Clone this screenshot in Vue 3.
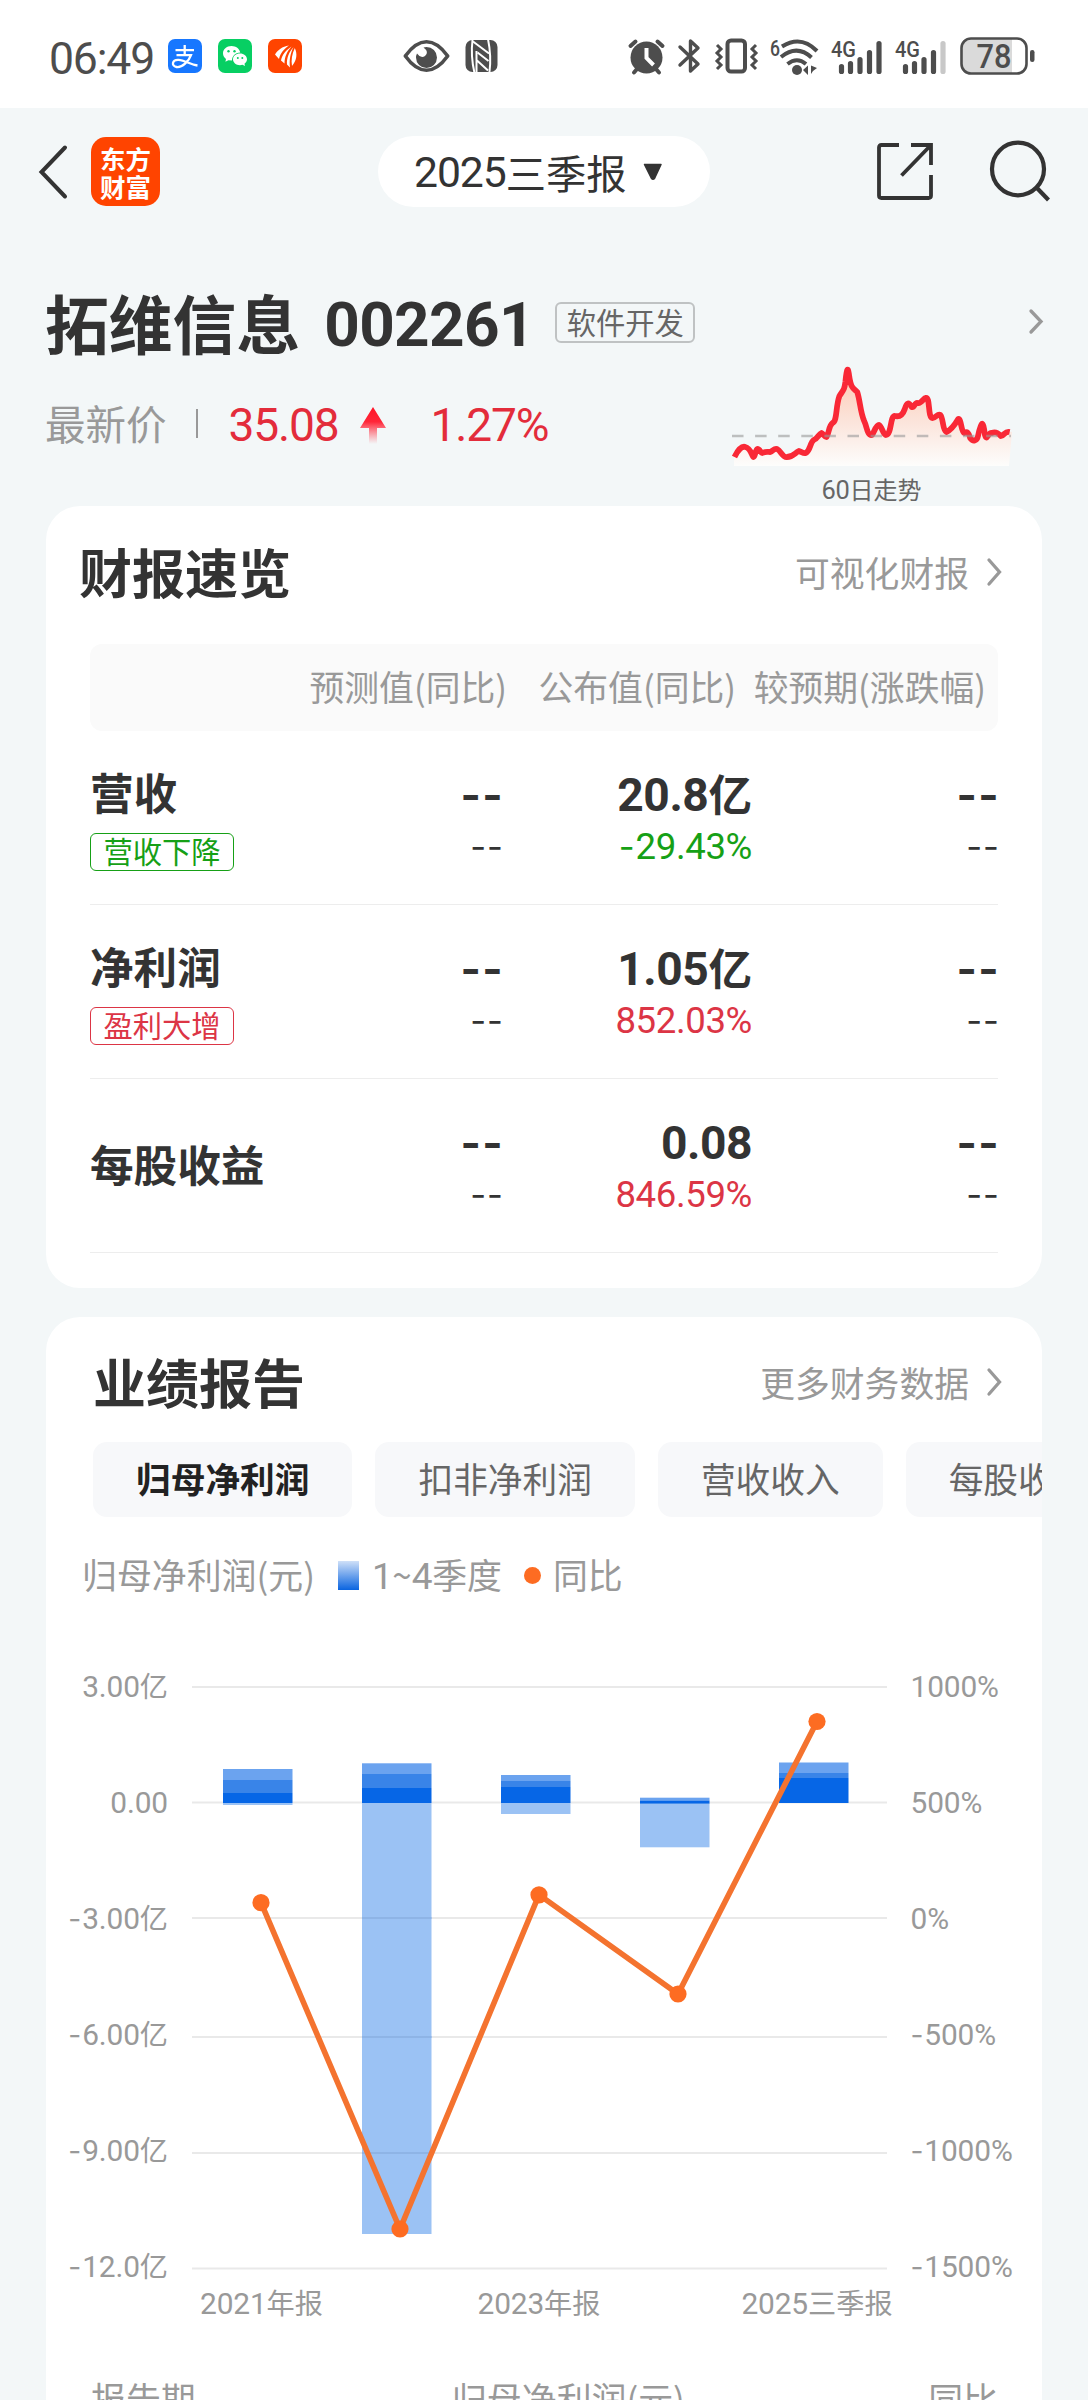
<script setup>
import { h } from 'vue'

// Splits a string so figures and dashes get their own typeface next to the Chinese text.
const Txt = (props) =>
  (props.s.match(/[0-9.%:]+|-+|[^0-9.%:-]+/g) || []).map((part) => {
    if (/^[0-9.%:]/.test(part)) return h(props.tag, { class: 'fig' }, part)
    if (part[0] === '-') return h(props.tag, { class: 'dash' }, part)
    return part
  })
Txt.props = { s: String, tag: { type: String, default: 'span' } }

const rows = [
  { name: '营收', tag: '营收下降', tone: 'down', value: '20.8亿', rate: '-29.43%' },
  { name: '净利润', tag: '盈利大增', tone: 'up', value: '1.05亿', rate: '852.03%' },
  { name: '每股收益', tag: '', tone: 'up', value: '0.08', rate: '846.59%' },
]
const tabs = ['归母净利润', '扣非净利润', '营收收入', '每股收益']

const grid = [
  { y: 47, ly: 57, left: '3.00亿', right: '1000%' },
  { y: 162.5, ly: 173, left: '0.00', right: '500%' },
  { y: 278, ly: 289, left: '-3.00亿', right: '0%' },
  { y: 397, ly: 405, left: '-6.00亿', right: '-500%' },
  { y: 513, ly: 521, left: '-9.00亿', right: '-1000%' },
  { y: 628.5, ly: 637, left: '-12.0亿', right: '-1500%' },
]
const C = ['#6ba3ef', '#3984e8', '#0666e6', '#9bc2f4']
const bars = [
  { x: 177, seg: [[129, 140, 0], [140, 153, 1], [153, 163, 2], [163, 165, 3]] },
  { x: 316, seg: [[123.3, 134, 0], [134, 148, 1], [148, 163, 2], [163, 594, 3]] },
  { x: 455, seg: [[135, 141, 0], [141, 147, 1], [147, 163, 2], [163, 174, 3]] },
  { x: 594, seg: [[157.7, 160.5, 0], [160.5, 163.8, 2], [163.8, 207.3, 3]] },
  { x: 733, seg: [[122.5, 133, 0], [133, 138, 1], [138, 163, 2]] },
]
const points = [[215, 262.7], [354, 589], [493, 254.8], [632, 354], [771, 81.5]]
const path = points.map((p) => p.join(',')).join(' ')
const periods = [
  { x: 215.5, t: '2021年报' },
  { x: 493, t: '2023年报' },
  { x: 771, t: '2025三季报' },
]
const trend =
  'M2 93 C6 85 10 82 13 83 C18 84 19 90 21 93 C23 93 23 86 25 85 C28 85 28 89 30 89 C34 87 36 88 38 88 C41 87 42 84 45 85 C49 87 51 94 55 93 C61 93 63 89 67 87 C70 88 72 90 74 89 C79 86 78 79 82 76 C86 75 87 70 90 69 C92 70 93 73 95 73 C98 68 97 62 101 59 C106 57 104 43 108 32 C112 26 113 26 114 18 Q116 -4 118 13 C120 25 122 24 126 28 C129 37 129 48 133 57 C136 63 136 72 141 71 C143 68 145 61 148 61 C151 62 152 71 155 71 C161 70 159 52 164 52 C169 53 172 51 174 45 C176 38 178 38 181 43 C184 44 184 38 187 39 C191 40 193 34 195 34 C200 32 197 54 202 54 C206 54 207 49 210 51 C213 54 212 66 216 68 C221 66 225 60 228 55 C231 54 231 68 234 69 C237 67 239 69 240 74 C243 78 247 77 248 72 C251 58 253 54 255 71 C257 78 258 68 262 69 C267 67 269 70 271 72 C275 71 275 67 280 68'
</script>

<template>
  <div class="page">
    <header class="status">
      <span class="clock"><Txt s="06:49" /></span>
      <svg class="app" width="34" height="34" viewBox="0 0 34 34">
        <rect width="34" height="34" rx="7" fill="#1777ff" />
        <path d="M7.500 11.200H26M16.700 6V16M8.500 16.200H23C21 22 14 29 8.500 28C3 27 4 20.500 10.500 20.800C17 21.200 22 25.500 29.500 26.500" fill="none" stroke="#fff" stroke-width="2.300" />
      </svg>
      <svg class="app" width="34" height="34" viewBox="0 0 34 34">
        <rect width="34" height="34" rx="7" fill="#07cf63" />
        <path d="M13.500 7C8.500 7 5 10.300 5 14.300C5 16.700 6.200 18.700 8 20L7.400 22.700L10.400 21.200L14 21.600C14 17 17 14 22.300 13.500C21.500 9.800 18 7 13.500 7Z" fill="#fff" />
        <path d="M22 14.500C17.800 14.500 15 17.200 15 20.300C15 23.600 18 26.200 22 26.200L24.500 25.800L27 27L26.500 24.800C28 23.700 29 22.200 29 20.300C29 17.200 26 14.500 22 14.500Z" fill="#fff" />
        <g fill="#07cf63"><circle cx="10.500" cy="12.300" r="1.200" /><circle cx="16.500" cy="12.300" r="1.200" /><circle cx="19.800" cy="19" r="1" /><circle cx="24.300" cy="19" r="1" /></g>
      </svg>
      <svg class="app" width="34" height="34" viewBox="0 0 34 34">
        <rect width="34" height="34" rx="7" fill="#ff4400" />
        <path d="M21 6.500C14 7.500 10 11 7 15.500L11 20C12.500 14 16 10 21 6.500ZM23.500 7.500C18 11 14 16 13 21.500L16.500 24.500C16.500 18 19 12.500 23.500 7.500ZM25.500 8C21 13 18.500 19 19 25.500L22 28.500C21 21 22.500 14 25.500 8ZM26.800 9C24 15 23 21 24 27C29 21 29.500 15 26.800 9Z" fill="#fff" />
      </svg>
      <svg class="eye" width="47" height="34" viewBox="0 0 47 34">
        <path d="M2.300 17C16 -2 31 -2 44.700 17C31 36 16 36 2.300 17Z" fill="none" stroke="#4d4d4d" stroke-width="3.600" stroke-linejoin="round" />
        <path d="M23.500 8A10.500 10.500 0 1 1 13 18.500Q13 16.500 14 14.500Q18 20 22 17Q26.500 13 20.500 8.500Q22 8 23.500 8Z" fill="#4d4d4d" />
      </svg>
      <svg class="nfc" width="33" height="34" viewBox="0 0 33 34">
        <rect x=".5" y="1" width="32" height="32" rx="7" fill="#4d4d4d" />
        <g fill="none" stroke="#fff" stroke-width="2">
          <path d="M7.500 1Q5.500 17 9.500 34" /><path d="M23 0Q26.500 17 24.500 33" />
          <path d="M8 2.500L24 14.500M12.500 13.500L23.500 22" />
          <path d="M11.500 12V33M12 21.500L23 31.500" />
        </g>
      </svg>
      <span class="grow"></span>
      <svg width="37" height="36" viewBox="0 0 37 36">
        <g stroke="#4d4d4d" stroke-width="4" stroke-linecap="round"><path d="M2.500 8L7.500 3.500M34.500 8L29.500 3.500M9 31L6 34.500M28 31L31 34.500" /></g>
        <circle cx="18.500" cy="19.500" r="16" fill="#4d4d4d" />
        <path d="M18.500 10V20L25.500 27" fill="none" stroke="#fff" stroke-width="4" />
      </svg>
      <svg class="bt" width="23" height="36" viewBox="0 0 23 36">
        <path d="M2 9L20 26L12.500 33V3L20 10L2 27" fill="none" stroke="#4d4d4d" stroke-width="3.400" stroke-linejoin="round" stroke-linecap="round" />
      </svg>
      <svg class="vib" width="43" height="36" viewBox="0 0 43 36">
        <rect x="12.500" y="2.500" width="17.500" height="31" rx="3.500" fill="none" stroke="#4d4d4d" stroke-width="4" />
        <path d="M2 7L6 11L2 15L6 19L2 23L6 27L2 31M41 7L37 11L41 15L37 19L41 23L37 27L41 31" fill="none" stroke="#4d4d4d" stroke-width="3" />
      </svg>
      <span class="wifi">
        <svg width="49" height="37" viewBox="0 0 49 37">
          <text x="0" y="17.500" class="small" textLength="10" lengthAdjust="spacingAndGlyphs">6</text>
          <g fill="none" stroke="#4d4d4d" stroke-width="4"><path d="M12 8.500Q31 -3.500 47 13" /><path d="M11 19Q27 6 41.500 19.500" /><path d="M17.500 26Q27 18.500 36 26" /></g>
          <circle cx="27" cy="32" r="5" fill="#4d4d4d" />
          <path d="M33 32L38 27.500V37ZM40.500 28V37ZM47 30L41 27.500V36L43 33Z" fill="#4d4d4d" />
        </svg>
      </span>
      <svg v-for="n in 2" :key="n" class="signal" width="53" height="37" viewBox="-1 0 53 37">
        <text x="0" y="18.500" class="small" textLength="25" lengthAdjust="spacingAndGlyphs">4G</text>
        <g stroke="#4d4d4d" stroke-width="5.200" stroke-linecap="round">
          <path d="M10.500 28.500V33.500M19.500 25.500V33.500M29 21.500V33.500M38.500 14.500V33.500" />
          <path d="M48 5.500V33.500" :stroke="n === 2 ? '#c8c8c8' : '#4d4d4d'" />
        </g>
      </svg>
      <svg class="battery" width="76" height="38" viewBox="0 0 76 38">
        <path d="M10 2H52V36H10Q2 36 2 28V10Q2 2 10 2Z" fill="#dadada" />
        <rect x="1.500" y="1.500" width="65" height="35" rx="9.500" fill="none" stroke="#4d4d4d" stroke-width="2.600" />
        <rect x="70" y="13" width="4.500" height="12" rx="2.200" fill="#4d4d4d" />
        <text x="34" y="31" class="level" text-anchor="middle" textLength="35" lengthAdjust="spacingAndGlyphs">78</text>
      </svg>
    </header>

    <nav class="nav">
      <svg class="back" width="29" height="54" viewBox="0 0 29 54"><path d="M26 2.500L2.500 27L26 51.500" fill="none" stroke="#333" stroke-width="4" stroke-linecap="round" /></svg>
      <div class="logo"><span>东方</span><span>财富</span></div>
      <div class="pill"><Txt s="2025三季报" />
        <svg width="20" height="18" viewBox="0 0 20 18"><path d="M1.500 1.500H18L11.500 15.500Q10 17 8.500 15.500Z" fill="#333" stroke="#333" stroke-width="1.500" stroke-linejoin="round" /></svg>
      </div>
      <svg class="share" width="56" height="57" viewBox="0 0 56 57"><path d="M22 2H4.500Q2 2 2 4.500V52.500Q2 55 4.500 55H51.500Q54 55 54 52.500V32M34 2H54V22M54 2L24.500 32.500" fill="none" stroke="#333" stroke-width="3.800" /></svg>
      <svg class="search" width="62" height="62" viewBox="0 0 62 62"><ellipse cx="28" cy="28" rx="26" ry="26.300" fill="none" stroke="#333" stroke-width="4.200" /><path d="M46 46L58.500 59" stroke="#333" stroke-width="4.200" /></svg>
    </nav>

    <section class="hero">
      <div class="title-row">
        <h1>拓维信息</h1>
        <span class="code"><Txt s="002261" /></span>
        <span class="industry">软件开发</span>
        <svg class="chev" width="16" height="28" viewBox="0 0 16 28"><path d="M3 3L13 13.500L3 24" fill="none" stroke="#999" stroke-width="3.300" stroke-linecap="round" /></svg>
      </div>
      <div class="price-row">
        <span class="label">最新价</span><i class="bar"></i>
        <span class="price"><Txt s="35.08" /></span>
        <svg class="arrow" width="26" height="37" viewBox="0 0 26 37">
          <defs><linearGradient id="rise" x1="0" y1="0" x2="0" y2="1"><stop offset="0" stop-color="#ff1528" /><stop offset=".4" stop-color="#ff2638" /><stop offset="1" stop-color="#ff5060" stop-opacity="0" /></linearGradient></defs>
          <path d="M13 0L26 21H17V37H9V21H0Z" fill="url(#rise)" />
        </svg>
        <span class="change"><Txt s="1.27%" /></span>
        <figure class="trend">
          <svg width="280" height="104" viewBox="0 0 280 104">
            <defs><linearGradient id="glow" x1="0" y1="0" x2="0" y2="1"><stop offset="0" stop-color="#ffc8b0" /><stop offset=".5" stop-color="#fbe2d8" /><stop offset="1" stop-color="#fdfdfc" /></linearGradient></defs>
            <path :d="trend + 'L277 102H2Z'" fill="url(#glow)" />
            <path :d="trend" transform="translate(.500 0) scale(.99 1)" fill="none" stroke="#f92836" stroke-width="5.800" stroke-linejoin="round" />
            <path d="M0 72H279" stroke="#999" stroke-opacity=".6" stroke-width="2.600" stroke-dasharray="11.500 11.600" />
          </svg>
          <figcaption><Txt s="60日走势" /></figcaption>
        </figure>
      </div>
    </section>

    <section class="card overview">
      <div class="card-head">
        <h2>财报速览</h2>
        <a class="more">可视化财报<svg class="chev" width="16" height="30" viewBox="0 0 16 30"><path d="M3 3L13.500 15L3 27" fill="none" stroke="#999" stroke-width="3.300" stroke-linecap="round" /></svg></a>
      </div>
      <div class="thead"><span>预测值(同比)</span><span>公布值(同比)</span><span>较预期(涨跌幅)</span></div>
      <div v-for="r in rows" :key="r.name" class="row">
        <div class="item" :class="{ solo: !r.tag }">
          <b>{{ r.name }}</b>
          <span v-if="r.tag" class="badge" :class="r.tone">{{ r.tag }}</span>
        </div>
        <div class="cell none"><b><Txt s="--" /></b><span><Txt s="--" /></span></div>
        <div class="cell"><b><Txt :s="r.value" /></b><span :class="r.tone"><Txt :s="r.rate" /></span></div>
        <div class="cell none"><b><Txt s="--" /></b><span><Txt s="--" /></span></div>
      </div>
    </section>

    <section class="card report">
      <div class="card-head">
        <h2>业绩报告</h2>
        <a class="more">更多财务数据<svg class="chev" width="16" height="30" viewBox="0 0 16 30"><path d="M3 3L13.500 15L3 27" fill="none" stroke="#999" stroke-width="3.300" stroke-linecap="round" /></svg></a>
      </div>
      <div class="tabs"><span v-for="(t, i) in tabs" :key="t" :class="{ active: i === 0 }">{{ t }}</span></div>
      <div class="legend">
        <span>归母净利润(元)</span><i class="swatch"></i><span><Txt s="1~4季度" /></span><i class="dot"></i><span>同比</span>
      </div>
      <svg class="chart" width="996" height="710" viewBox="0 0 996 710">
        <g v-for="g in grid" :key="g.y">
          <path :d="`M146 ${g.y}H841`" stroke="#e9e9e9" stroke-width="2" />
          <text x="122" :y="g.ly" text-anchor="end"><Txt tag="tspan" :s="g.left" /></text>
          <text x="864.500" :y="g.ly"><Txt tag="tspan" :s="g.right" /></text>
        </g>
        <g v-for="b in bars" :key="b.x">
          <rect v-for="s in b.seg" :key="s[0]" :x="b.x" :y="s[0]" width="69.500" :height="s[1] - s[0]" :fill="C[s[2]]" />
        </g>
        <path d="M316 278H385.500M316 397H385.500M316 513H385.500" stroke="#8eb4e6" stroke-width="2" />
        <polyline :points="path" fill="none" stroke="#f4732f" stroke-width="5.600" />
        <circle v-for="p in points" :key="p[0]" :cx="p[0]" :cy="p[1]" r="8.600" fill="#fd6c22" />
        <text v-for="p in periods" :key="p.x" :x="p.x" y="674" text-anchor="middle"><Txt tag="tspan" :s="p.t" /></text>
      </svg>
      <div class="list-head"><span>报告期</span><span class="mid">归母净利润(元)</span><span>同比</span></div>
    </section>
  </div>
</template>

<style>
body { margin: 0; background: #f3f7f8; }
.fig { font-family: Roboto, sans-serif; font-size: 1.06em; line-height: 0; letter-spacing: var(--fig-gap, -0.01em); }
.dash { font-family: Inter, sans-serif; line-height: 0; letter-spacing: 0.03em; }
</style>

<style scoped>
.page { width: 1088px; height: 2400px; overflow: hidden; background: #f3f7f8; color: #333; font-family: "Noto Sans CJK SC", sans-serif; }
h1, h2, figure { margin: 0; }
svg { display: block; flex: none; overflow: visible; }
.status { display: flex; align-items: center; height: 108px; padding: 4px 52px 0 49px; box-sizing: border-box; background: #fff; }
.clock { --fig-gap: -0.026em; width: 119px; font-size: 42px; line-height: 60px; color: #4d4d4d; white-space: nowrap; }
.app { margin-right: 16px; }
.eye { margin-left: 85px; }
.nfc { margin-left: 15px; }
.grow { flex: 1; }
.bt { margin-left: 13px; }
.vib { margin-left: 14px; }
.wifi { margin-left: 12px; }
.signal { margin-left: 11px; }
.battery { margin-left: 13px; }
.small { font: 500 22.500px Roboto, sans-serif; fill: #4d4d4d; }
.level { font: 500 34px Roboto, sans-serif; fill: #4d4d4d; }

.nav { display: flex; align-items: center; height: 127px; padding: 0 36px 0 39px; }
.logo { display: flex; flex-direction: column; align-items: center; justify-content: center; width: 69px; height: 69px; margin-left: 23px; border-radius: 15px; background: #ff4400; color: #fff; font-weight: 700; font-size: 25.500px; line-height: 28px; }
.pill { --fig-gap: -0.025em; display: flex; align-items: center; width: 332px; height: 71px; margin-left: 218px; padding-left: 36px; box-sizing: border-box; border-radius: 36px; background: #fff; font-size: 40.300px; line-height: 70px; }
.pill svg { margin-left: 16px; }
.share { margin-left: auto; }
.search { margin-left: 57px; }

.hero { height: 271px; }
.title-row { display: flex; align-items: center; height: 90px; padding: 41px 44px 0 45px; }
h1 { font-size: 63.800px; line-height: 90px; font-weight: 700; }
.code { width: 231px; margin-left: 24px; font-size: 58.500px; font-weight: 700; line-height: 90px; }
.industry { height: 37px; margin-top: 3px; padding: 0 9.500px; border: 2px solid #bfc2c3; border-radius: 6px; font-size: 29.300px; line-height: 35px; color: #666; }
.title-row .chev { margin: 2px 0 0 auto; }
.price-row { display: flex; height: 140px; padding-left: 45px; line-height: 114px; }
.label { font-size: 40.500px; color: #999; }
.bar { width: 2px; height: 29px; margin: 43px 0 0 29px; background: #999; }
.price, .change { --fig-gap: -0.025em; font-size: 43.500px; color: #e32c3b; }
.price { width: 131px; margin-left: 31px; }
.arrow { margin-top: 41px; }
.change { width: 301px; margin-left: 45px; }
.trend { margin-top: -2px; line-height: 30px; }
.trend figcaption { height: 30px; margin-top: 6px; text-align: center; font-size: 24px; color: #666; }

.card { margin: 0 46px; border-radius: 34px; background: #fff; overflow: hidden; }
.card-head { display: flex; justify-content: space-between; align-items: flex-start; }
h2 { font-size: 53px; line-height: 70px; font-weight: 700; }
.more { display: flex; align-items: center; margin-top: 11px; font-size: 34.800px; line-height: 50px; color: #999; }
.more .chev { margin-left: 17px; }
.overview { height: 782px; }
.overview .card-head { height: 108px; padding: 30px 40px 0 33px; }
.thead { display: grid; grid-template-columns: 417px 229px 250px; height: 87px; margin: 0 44px; padding-right: 12px; border-radius: 12px; background: #fafafa; text-align: right; font-size: 34.800px; line-height: 85px; color: #999; white-space: nowrap; }
.row { display: grid; grid-template-columns: 162px 250px 250px 246px; height: 173px; margin: 0 44px; border-bottom: 1px solid #ededed; }
.row b { display: block; font-size: 43.600px; line-height: 60px; white-space: nowrap; }
.item { padding-top: 30px; }
.item.solo { padding-top: 54px; }
.badge { display: inline-block; margin-top: 12px; width: 142px; height: 36px; border: 1.500px solid; border-radius: 6px; font-size: 29.300px; line-height: 32px; text-align: center; white-space: nowrap; vertical-align: top; }
.cell { padding-top: 31px; text-align: right; }
.cell.none { margin-right: -2px; }
.cell span { display: block; font-size: 34.500px; line-height: 45px; }
.cell span span, .cell b span { display: inline; font-size: inherit; line-height: 0; }
.down, .cell .down { color: #16a016; }
.up, .cell .up { color: #dc3545; }

.report { height: 1160px; margin-top: 29px; }
.report .card-head { height: 125px; padding: 29px 40px 0 47px; box-sizing: border-box; }
.tabs { display: flex; gap: 23px; height: 75px; padding-left: 47px; }
.tabs span { flex: none; padding: 0 43px; border-radius: 14px; background: #f7f8fa; font-size: 34.700px; line-height: 73px; color: #666; }
.tabs .active { color: #222; font-weight: 700; }
.legend { display: flex; align-items: center; height: 116px; padding-left: 36px; font-size: 34.900px; line-height: 52px; color: #999; }
.legend span { margin-top: -2px; }
.swatch { width: 21px; height: 29px; margin: 0 13px 0 23px; background: linear-gradient(#cfe0f8, #0a64e0); }
.dot { width: 17px; height: 17px; margin: 0 12px 0 22px; border-radius: 50%; background: #fd6c22; }
.chart { margin-top: 7px; }
.chart text { --fig-gap: -0.005em; font-size: 28.200px; fill: #999; }
.list-head { display: flex; justify-content: space-between; padding: 23px 44px 0 45px; font-size: 34.900px; line-height: 50px; color: #999; }
.list-head .mid { margin-left: 13px; }
</style>
